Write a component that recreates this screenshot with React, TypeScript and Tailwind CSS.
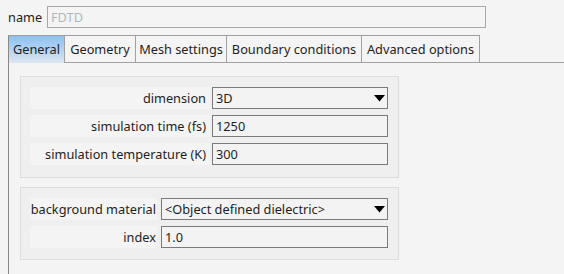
import React from "react";

const font = { fontFamily: '"Noto Sans", "Open Sans", sans-serif' };

function Arrow() {
  return (
    <svg width="11" height="7" viewBox="0 0 11 7" className="shrink-0">
      <polygon points="0,0 11,0 5.5,6.5" fill="#000" />
    </svg>
  );
}

function Row({
  label,
  value,
  labelCls,
  gap,
  select,
}: {
  label: string;
  value: string;
  labelCls: string;
  gap: string;
  select?: boolean;
}) {
  return (
    <div className={`flex h-[22px] ${gap}`}>
      <div
        className={`${labelCls} bg-[#f4f4f4] flex items-center justify-end whitespace-nowrap text-[#1f1f1f]`}
      >
        {label}
      </div>
      <div className="flex-1 border border-[#7a7a7a] bg-[#f3f3f3] flex items-center pl-[3px] pr-[2px] text-[#1f1f1f]">
        <span className="flex-1 whitespace-nowrap">{value}</span>
        {select && <Arrow />}
      </div>
    </div>
  );
}

export default function App() {
  const tabs = [
    { t: "General", w: "w-[57px]" },
    { t: "Geometry", w: "w-[71px]" },
    { t: "Mesh settings", w: "w-[91px]" },
    { t: "Boundary conditions", w: "w-[135px]" },
    { t: "Advanced options", w: "w-[118px]" },
  ];
  return (
    <div
      className="w-[564px] h-[274px] bg-[#f4f4f4] overflow-hidden flex flex-col text-[12.75px] leading-none"
      style={font}
    >
      <div className="flex items-center pt-[6px] pl-[8px]">
        <span className="w-[39px] text-[#1f1f1f]">name</span>
        <div className="w-[439px] h-[22px] border border-[#a8a8a8] bg-[#f4f4f4] flex items-center pl-[3px] text-[#a9b8c6]">
          FDTD
        </div>
      </div>
      <div className="flex mt-[7px] pl-[8px] h-[28px]">
        {tabs.map((tab, i) => (
          <div
            key={tab.t}
            className={`${tab.w} shrink-0 flex items-center justify-center border-t border-r border-[#a0a0a0] text-[#1f1f1f] ${
              i === 0
                ? "border-l border-l-[#888] bg-linear-to-b from-[#8cc0f2] to-[#dce5ee]"
                : "border-b bg-[#f4f4f4]"
            }`}
          >
            {tab.t}
          </div>
        ))}
        <div className="flex-1 border-b border-[#a0a0a0]" />
      </div>
      <div className="flex-1 ml-[8px] border-l border-[#888] pl-[11px] pt-[13px]">
        <div className="w-[379px] border border-[#dcdcdc] bg-[#efefef] pt-[10px] pb-[12px] pl-[9px] pr-[10px] flex flex-col gap-[6px]">
          <Row label="dimension" value="3D" labelCls="w-[180px] pr-[4px]" gap="gap-[2px]" select />
          <Row label="simulation time (fs)" value="1250" labelCls="w-[180px] pr-[4px]" gap="gap-[2px]" />
          <Row label="simulation temperature (K)" value="300" labelCls="w-[180px] pr-[4px]" gap="gap-[2px]" />
        </div>
        <div className="mt-[9px] w-[379px] border border-[#dcdcdc] bg-[#efefef] pt-[10px] pb-[11px] pl-[9px] pr-[10px] flex flex-col gap-[6px]">
          <Row
            label="background material"
            value="<Object defined dielectric>"
            labelCls="w-[127px] pr-[1px]"
            gap="gap-[4px]"
            select
          />
          <Row label="index" value="1.0" labelCls="w-[127px] pr-[1px]" gap="gap-[4px]" />
        </div>
      </div>
    </div>
  );
}
